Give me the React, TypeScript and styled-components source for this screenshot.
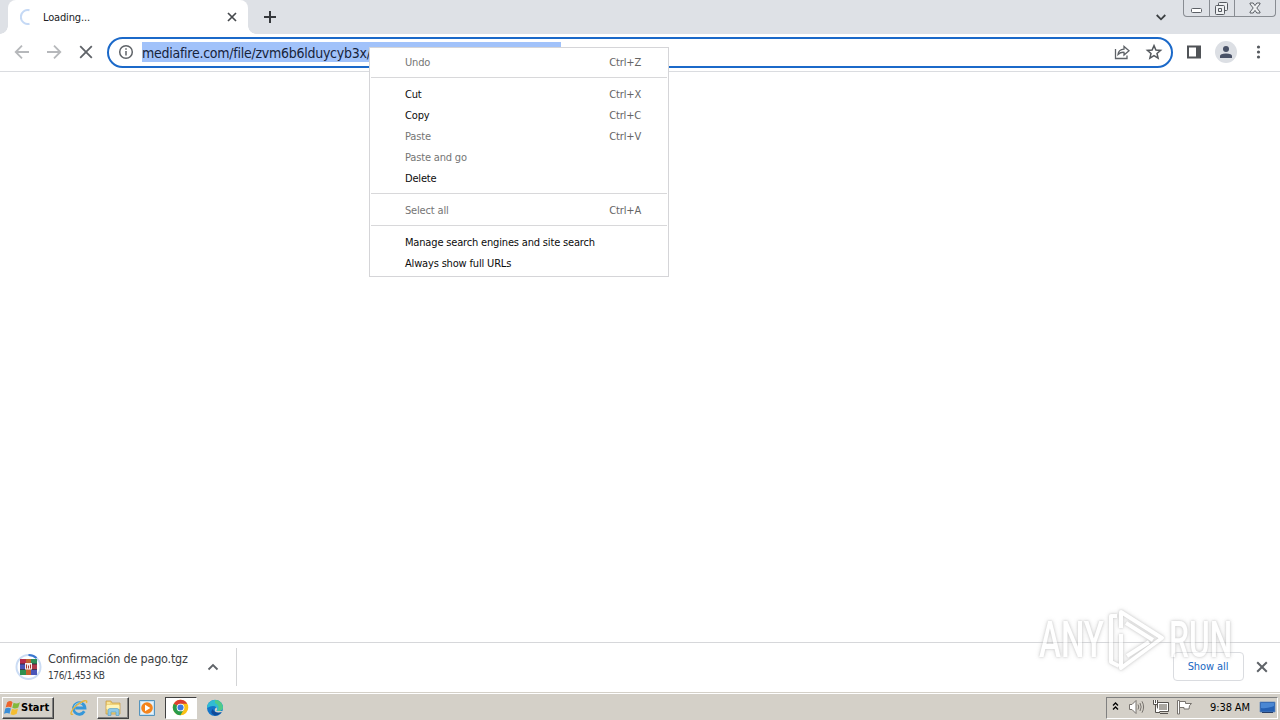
import React from 'react';
import styled, { createGlobalStyle } from 'styled-components';

interface MenuEntry {
	label: string;
	shortcut?: string;
	disabled?: boolean;
}

const menuGroups: MenuEntry[][] = [
	[{ disabled: true, label: 'Undo', shortcut: 'Ctrl+Z' }],
	[
		{ label: 'Cut', shortcut: 'Ctrl+X' },
		{ label: 'Copy', shortcut: 'Ctrl+C' },
		{ disabled: true, label: 'Paste', shortcut: 'Ctrl+V' },
		{ disabled: true, label: 'Paste and go' },
		{ label: 'Delete' }
	],
	[{ disabled: true, label: 'Select all', shortcut: 'Ctrl+A' }],
	[
		{ label: 'Manage search engines and site search' },
		{ label: 'Always show full URLs' }
	]
];

const GlobalStyle = createGlobalStyle`
	body {
		margin: 0;
		overflow: hidden;
	}

	* {
		box-sizing: border-box;
	}

	svg {
		display: block;
		flex: none;
	}
`;

const Screen = styled.div`
	position: relative;
	display: flex;
	flex-direction: column;
	width: 1280px;
	height: 720px;
	overflow: hidden;
	background: #fff;
	color: #202124;
	font: 11px 'DejaVu Sans Condensed', 'DejaVu Sans', sans-serif;
	font-stretch: condensed;
	white-space: nowrap;
`;

const Text = styled.span<{ $size?: number; $spacing?: number; $color?: string; $bold?: boolean }>`
	font-size: ${p => p.$size || 11}px;
	letter-spacing: ${p => p.$spacing || 0}px;
	color: ${p => p.$color || 'inherit'};
	font-weight: ${p => p.$bold ? 700 : 400};
`;

const TabStrip = styled.div`
	display: flex;
	height: 34px;
	flex: none;
	padding-left: 8px;
	background: #dee1e6;
`;

const Tab = styled.div`
	position: relative;
	display: flex;
	align-items: center;
	width: 240px;
	padding: 0 11px 0 12px;
	border-radius: 8px 8px 0 0;
	background: #fff;

	&::before,
	&::after {
		content: '';
		position: absolute;
		bottom: 0;
		width: 8px;
		height: 8px;
	}

	&::before {
		left: -8px;
		background: radial-gradient(circle at 0 0, transparent 7.5px, #fff 8px);
	}

	&::after {
		right: -8px;
		background: radial-gradient(circle at 100% 0, transparent 7.5px, #fff 8px);
	}
`;

const TabTitle = styled(Text)`
	flex: 1;
	margin-left: 7px;
`;

const NewTab = styled.div`
	display: flex;
	align-items: center;
	margin-left: 15px;
`;

const StripEnd = styled.div`
	display: flex;
	align-items: flex-start;
	margin-left: auto;
	padding-right: 4px;
`;

const TabSearch = styled.div`
	padding: 14px 17px 0 0;
`;

const WindowButtons = styled.div`
	display: flex;
	height: 17px;
	border: 1px solid #888c92;
	border-top: 0;
	border-radius: 0 0 4px 4px;
`;

const WindowButton = styled.div<{ $width: number }>`
	display: flex;
	align-items: center;
	justify-content: center;
	width: ${p => p.$width}px;

	& + & {
		border-left: 1px solid #888c92;
	}
`;

const Toolbar = styled.div`
	display: flex;
	align-items: center;
	height: 38px;
	flex: none;
	padding: 0 12px 1px 12px;
	border-bottom: 1px solid #dadce0;
`;

const NavButtons = styled.div`
	display: flex;
	gap: 12px;
	margin-right: 11px;
`;

const Omnibox = styled.div`
	display: flex;
	align-items: center;
	width: 1066px;
	height: 31px;
	margin-top: 1px;
	padding: 0 8px 1px 9px;
	border: 2px solid #1b69c9;
	border-radius: 16px;
`;

const Url = styled.div`
	width: 419px;
	height: 20px;
	margin: 0 auto 0 6px;
	overflow: hidden;
	background: #a1c2fa;
	color: #17243b;
	font: 14px/22px 'DejaVu Sans Condensed', 'DejaVu Sans', sans-serif;
	font-stretch: condensed;
	letter-spacing: -0.26px;
`;

const UrlTail = styled.span`
	margin-left: 66px;
`;

const BoxActions = styled.div`
	display: flex;
	gap: 14px;
`;

const ToolbarActions = styled.div`
	display: flex;
	align-items: center;
	margin-left: 13px;
`;

const Avatar = styled.div`
	display: flex;
	align-items: center;
	justify-content: center;
	width: 22px;
	height: 22px;
	margin: 0 13px;
	border-radius: 50%;
	background: #dcdfe4;
`;

const Page = styled.div`
	flex: 1;
	background: #fff;
`;

const Menu = styled.div`
	position: absolute;
	left: 369px;
	top: 47px;
	width: 300px;
	height: 230px;
	padding: 4px 1px;
	border: 1px solid #d5d5d8;
	background: #fff;
`;

const MenuGroup = styled.div`
	& + & {
		margin-top: 4px;
		padding-top: 6px;
		border-top: 1px solid #d8d8da;
	}
`;

const MenuRow = styled.div<{ $disabled?: boolean }>`
	display: flex;
	align-items: center;
	justify-content: space-between;
	height: 21px;
	padding: 0 26px 0 34px;
	color: ${p => p.$disabled ? '#757575' : '#0c0c0c'};
	letter-spacing: -0.17px;
`;

const Shortcut = styled.span`
	color: #656565;
`;

const Shelf = styled.div`
	display: flex;
	align-items: center;
	height: 50px;
	flex: none;
	padding: 0 12px 2px 15px;
	border-top: 1px solid #d6d7da;
`;

const Download = styled.div`
	display: flex;
	align-items: center;
	width: 222px;
	height: 38px;
	border-right: 1px solid #d3d4d6;
`;

const FileInfo = styled.div`
	display: flex;
	flex-direction: column;
	gap: 4px;
	width: 140px;
	margin: 0 19px 0 6px;
	padding-bottom: 1px;
`;

const ShowAll = styled.div`
	display: flex;
	align-items: center;
	justify-content: center;
	width: 71px;
	height: 29px;
	margin: 0 12px 0 auto;
	padding-right: 1px;
	border: 1px solid #dadce0;
	border-radius: 4px;
	color: #1967c2;
`;

const Taskbar = styled.div`
	display: flex;
	align-items: center;
	height: 28px;
	flex: none;
	padding: 2px 2px 0 2px;
	border-top: 1px solid #d4d0c8;
	background: #d4d0c8;
	box-shadow: inset 0 1px #fff;
`;

const StartButton = styled.div`
	display: flex;
	align-items: center;
	width: 52px;
	height: 22px;
	padding-left: 1px;
	border: 1px solid;
	border-color: #fff #404040 #404040 #fff;
	box-shadow: inset -1px -1px #808080;
	color: #000;
`;

const TaskItem = styled.div<{ $state?: 'raised' | 'pressed' }>`
	display: flex;
	align-items: center;
	justify-content: center;
	width: 32px;
	height: 22px;
	border: 1px solid;
	border-color: ${p => p.$state === 'raised' ? '#fff #404040 #404040 #fff'
		: p.$state === 'pressed' ? '#404040 #fff #fff #404040' : 'transparent'};
	background: ${p => p.$state === 'pressed' ? '#fff' : 'transparent'};
	box-shadow: ${p => p.$state === 'raised' ? 'inset -1px -1px #808080' : 'none'};
`;

const TaskItems = styled.div`
	display: flex;
	gap: 2px;
	margin-left: 9px;
`;

const Tray = styled.div`
	display: flex;
	align-items: center;
	width: 172px;
	height: 22px;
	margin-left: auto;
	padding-left: 5px;
	border: 1px solid;
	border-color: #808080 #fff #fff #808080;
	color: #000;
`;

const TrayIcons = styled.div`
	display: flex;
	align-items: center;
	gap: 7px;
	padding-bottom: 1px;
`;

const Clock = styled(Text)`
	width: 41px;
	margin: 0 8px 0 16px;
`;

const Watermark = styled.div`
	position: absolute;
	left: 1039px;
	top: 606px;
	display: flex;
	align-items: center;
	gap: 2px;
	width: 200px;
	height: 68px;
	opacity: .6;
	filter: drop-shadow(0 0 1px #aaa) drop-shadow(0 0 2px #ccc);
`;

const Brand = styled.div<{ $scale: number }>`
	width: 66px;
	color: #fff;
	font: 500 50px/68px Roboto, sans-serif;
	transform: scaleX(${p => p.$scale});
	transform-origin: left;
`;

const CloseIcon = ({ size = 8, width = 1.8, color = '#46494d' }: { size?: number; width?: number; color?: string }) => (
	<svg width={size} height={size} viewBox='0 0 10 10' fill='none' stroke={color} strokeWidth={width * 10 / size}>
		<path d='M1 1 9 9M9 1 1 9'/>
	</svg>
);

const ArrowIcon = ({ flip }: { flip?: boolean }) => (
	<svg width='20' height='20' viewBox='0 0 20 20' fill='none' stroke='#b6b8bb' strokeWidth='1.8'>
		<path d={flip ? 'M3 10H16M10 3.7 16.3 10 10 16.3' : 'M17 10H4M10 3.7 3.7 10 10 16.3'}/>
	</svg>
);

const ArchiveIcon = () => (
	<svg width='27' height='28' viewBox='0 0 27 28'>
		<circle cx='13.5' cy='14' r='12' fill='none' stroke='#cbdcf4' strokeWidth='2'/>
		<path d='M13.5 2A12 12 0 0 1 21.5 5' fill='none' stroke='#3976cf' strokeWidth='2'/>
		<path d='M5 6H11V11H5Z' fill='#b52d4c'/>
		<path d='M16 6H22V11H16Z' fill='#2f8f55'/>
		<path d='M5 11H11V16.5H5ZM16 16.5H22V22H16Z' fill='#4a55b8'/>
		<path d='M5 16.5H11V22H5Z' fill='#2f9150'/>
		<path d='M16 11H22V16.5H16Z' fill='#b03a4a'/>
		<path d='M5 11H22M5 16.5H22' stroke='#29213b' strokeWidth='.8'/>
		<path d='M11 6H16V22H11Z' fill='#c4622f'/>
		<path d='M10 10H17V16.5H10Z' fill='#f3eeee'/>
		<path d='M11.5 15.5V11.5M13.5 12.5V15.5M15.5 11.5V15.5' fill='none' stroke='#a8392f' strokeWidth='1'/>
	</svg>
);

const WindowsLogo = () => (
	<svg width='17' height='18' viewBox='0 0 16 17'>
		<path d='M3 3Q6 1 8 3L6.8 8Q4 6.5 1.5 8Z' fill='#ed642c'/>
		<path d='M9 3.5Q12 5 15 3L13.5 8Q10.5 9.8 7.8 8.3Z' fill='#82b93c'/>
		<path d='M1.2 9Q4 7.5 6.5 9L5.2 14Q3 12.5 0 14Z' fill='#3a8ed7'/>
		<path d='M7.5 9.3Q10.5 10.8 13.2 9L12 14Q9 16 6.2 14.3Z' fill='#f5bd31'/>
	</svg>
);

const ExplorerIcon = () => (
	<svg width='18' height='18' viewBox='0 0 18 18' fill='none'>
		<path d='M14.3 12.3A5.8 5.8 0 1 1 15 9H5.2' stroke='#3697d9' strokeWidth='2.8'/>
		<path d='M4 8.3A5.5 5.5 0 0 1 12 4.5' stroke='#8bd0f3'/>
		<path d='M3 15C-.5 17 .5 11 7 6S18 .2 16.4 4' stroke='#e9b53a' strokeWidth='1.4'/>
	</svg>
);

const FolderIcon = () => (
	<svg width='18' height='18' viewBox='0 0 18 18'>
		<path d='M2 2H7L8 4H16V15H2Z' fill='#efd27a' stroke='#c79a3c' strokeWidth='.7'/>
		<path d='M3 4H6M3 6.5H15V10H3Z' fill='#fff4b8' stroke='#fff4b8'/>
		<path d='M4 16.5V11.5Q4 9.5 6 9.5H13Q15 9.5 15 11.5V16.5H12V13H7V16.5Z' fill='#8ec9e9' stroke='#529ac1' strokeWidth='.6'/>
	</svg>
);

const PlayerIcon = () => (
	<svg width='18' height='18' viewBox='0 0 18 18'>
		<path d='M1.5 1.5H16.5V16.5H1.5Z' fill='#c4e0f3' stroke='#5594bd'/>
		<path d='M3 3H15V15H3Z' fill='#e5f2fa'/>
		<circle cx='9' cy='9' r='5.8' fill='#f4841c'/>
		<path d='M7 5.7 12.3 9 7 12.3Z' fill='#fff'/>
	</svg>
);

const ChromeIcon = () => (
	<svg width='18' height='17' viewBox='0 0 19 18'>
		<circle cx='9' cy='9' r='8.2' fill='#fbc116'/>
		<path d='M9 9 1.9 4.9A8.2 8.2 0 0 1 16.1 4.9H9Z' fill='#dc3e31'/>
		<path d='M1.9 4.9A8.2 8.2 0 0 0 8.9 17.2L12.5 11 9 9Z' fill='#299b4b'/>
		<circle cx='9' cy='9' r='4.1' fill='#fff'/>
		<circle cx='9' cy='9' r='3.2' fill='#3c78df'/>
	</svg>
);

const EdgeIcon = () => (
	<svg width='18' height='18' viewBox='0 0 18 18'>
		<circle cx='9' cy='9' r='8' fill='#1575c9'/>
		<path d='M1 9A8 8 0 0 1 17 8.6Q17 12 12.5 12H10.5Q12 10 10.4 8.2 7 5.5 1 9Z' fill='#31bcd3'/>
		<path d='M9 1Q16 1 17 8.6 16.5 12 12 12 14 6 9 4Z' fill='#50ca89'/>
		<path d='M6.8 10Q8 14.5 15.5 13 12.5 17 8.5 16.4 3 14 6.8 10Z' fill='#104b99'/>
		<path d='M10.4 8.2Q12 10 10.5 12H17V12.5Q13 14 9.6 13 7.5 10.5 10.4 8.2Z' fill='#d4d0c8'/>
	</svg>
);

const ContextMenu = () => (
	<Menu>
		{menuGroups.map((group, i) => (
			<MenuGroup key={i}>
				{group.map(({ disabled, label, shortcut }) => (
					<MenuRow key={label} $disabled={disabled}>
						<span>{label}</span>
						{shortcut && <Shortcut>{shortcut}</Shortcut>}
					</MenuRow>
				))}
			</MenuGroup>
		))}
	</Menu>
);

const App = () => (
	<Screen>
		<GlobalStyle/>
		<TabStrip>
			<Tab>
				<svg width='16' height='16' viewBox='0 0 16 16' fill='none'>
					<path d='M9.5 1.2A7 7 0 1 0 9.5 14.8' stroke='#c5d9f5' strokeWidth='2'/>
				</svg>
				<TabTitle $spacing={-0.15}>Loading...</TabTitle>
				<CloseIcon size={10} width={1.7}/>
			</Tab>
			<NewTab>
				<svg width='14' height='14' viewBox='0 0 14 14' stroke='#35383c' strokeWidth='2'>
					<path d='M7 1V13M1 7H13'/>
				</svg>
			</NewTab>
			<StripEnd>
				<TabSearch>
					<svg width='10' height='7' viewBox='0 0 10 7' fill='none' stroke='#3c4043' strokeWidth='1.8'>
						<path d='M.7 1 5 5.3 9.3 1'/>
					</svg>
				</TabSearch>
				<WindowButtons>
					<WindowButton $width={25}>
						<svg width='12' height='9' viewBox='0 0 12 9' fill='#fff' stroke='#5c6066'>
							<rect x='.5' y='4.5' width='10' height='4' rx='1'/>
						</svg>
					</WindowButton>
					<WindowButton $width={25}>
						<svg width='14' height='13' viewBox='0 0 14 13' fill='#eef0f2' stroke='#565a60'>
							<rect x='3.5' y='.5' width='9' height='8' rx='1'/>
							<rect x='.5' y='3.5' width='9' height='9' rx='1'/>
							<path d='M3.5 6.5H6.5V9.5H3.5Z'/>
						</svg>
					</WindowButton>
					<WindowButton $width={41}>
						<svg width='13' height='12' viewBox='0 0 13 12' fill='#eef0f2' stroke='#5c6066'>
							<path d='M1 1H4.2L6 3.6 7.8 1H11V2L7.8 6 11 10V11H7.8L6 8.4 4.2 11H1V10L4.2 6 1 2Z'/>
						</svg>
					</WindowButton>
				</WindowButtons>
			</StripEnd>
		</TabStrip>
		<Toolbar>
			<NavButtons>
				<ArrowIcon/>
				<ArrowIcon flip/>
				<svg width='20' height='20' viewBox='0 0 20 20' fill='none' stroke='#5f6368' strokeWidth='1.8'>
					<path d='M4.2 4.2 15.8 15.8M15.8 4.2 4.2 15.8'/>
				</svg>
			</NavButtons>
			<Omnibox>
				<svg width='18' height='18' viewBox='0 0 18 18' fill='none' stroke='#5f6368' strokeWidth='1.5'>
					<circle cx='8' cy='9' r='6.3'/>
					<path d='M8 8V12.5M8 5.3V6.8'/>
				</svg>
				<Url>mediafire.com/file/zvm6b6lduycyb3x/<UrlTail>/</UrlTail></Url>
				<BoxActions>
					<svg width='18' height='18' viewBox='0 0 18 18' fill='none' stroke='#5f6368' strokeWidth='1.3'>
						<path d='M2.5 6V15.5H14V12.5M5 11.5Q5.5 6.5 11 6.2V3.5L16 7.8 11 12V9.3Q7.5 9 5 11.5Z'/>
					</svg>
					<svg width='18' height='18' viewBox='0 0 18 18' fill='none' stroke='#54585d' strokeWidth='1.5'>
						<path d='M9 2.6 10.9 7 15.6 7.4 12 10.5 13.1 15.2 9 12.7 4.9 15.2 6 10.5 2.4 7.4 7.1 7Z'/>
					</svg>
				</BoxActions>
			</Omnibox>
			<ToolbarActions>
				<svg width='16' height='16' viewBox='0 0 16 16'>
					<path d='M1 1.5H15V14.5H1ZM3 3.5V12.5H10V3.5Z' fill='#505357' fillRule='evenodd'/>
				</svg>
				<Avatar>
					<svg width='14' height='14' viewBox='0 0 14 14' fill='#485166'>
						<circle cx='7' cy='4' r='3'/>
						<path d='M1 13V11Q1 8.5 7 8.5T13 11V13Z'/>
					</svg>
				</Avatar>
				<svg width='16' height='16' viewBox='0 0 16 16' fill='#55595e'>
					<circle cx='8.5' cy='3' r='1.6'/>
					<circle cx='8.5' cy='8' r='1.6'/>
					<circle cx='8.5' cy='13' r='1.6'/>
				</svg>
			</ToolbarActions>
		</Toolbar>
		<Page/>
		<Shelf>
			<Download>
				<ArchiveIcon/>
				<FileInfo>
					<Text $size={12.5} $spacing={-0.2} $color='#3c4043'>Confirmación de pago.tgz</Text>
					<Text $size={10} $spacing={-0.35} $color='#3c4043'>176/1,453 KB</Text>
				</FileInfo>
				<svg width='12' height='8' viewBox='0 0 12 8' fill='none' stroke='#5f6368' strokeWidth='1.8'>
					<path d='M1.5 6.5 6 2 10.5 6.5'/>
				</svg>
			</Download>
			<ShowAll><Text $spacing={-0.1}>Show all</Text></ShowAll>
			<CloseIcon size={12} width={2} color='#5f6368'/>
		</Shelf>
		<Taskbar>
			<StartButton>
				<WindowsLogo/>
				<Text $bold>Start</Text>
			</StartButton>
			<TaskItems>
				<TaskItem><ExplorerIcon/></TaskItem>
				<TaskItem $state='raised'><FolderIcon/></TaskItem>
				<TaskItem><PlayerIcon/></TaskItem>
				<TaskItem $state='pressed'><ChromeIcon/></TaskItem>
				<TaskItem><EdgeIcon/></TaskItem>
			</TaskItems>
			<Tray>
				<TrayIcons>
					<svg width='9' height='12' viewBox='0 0 9 12' fill='none' stroke='#000' strokeWidth='1.3'>
						<path d='M1 4.5 3.5 2 6 4.5M1 8.5 3.5 6 6 8.5'/>
					</svg>
					<svg width='18' height='16' viewBox='0 0 18 16' fill='#fff' stroke='#77736e'>
						<path d='M1.5 5.5H4L8 1.5V14.5L4 10.5H1.5Z'/>
						<path d='M10 5.5Q11.5 8 10 10.5M12 4Q14.3 8 12 12M14 2.3Q17.2 8 14 13.7' fill='none'/>
					</svg>
					<svg width='17' height='16' viewBox='0 0 17 16' fill='#fff' stroke='#55524e'>
						<path d='M4.5 3.5H15.5V12.5H4.5Z'/>
						<path d='M6 5H14V11H6Z' fill='#aaa7a1' stroke='none'/>
						<path d='M.5 1V5.5H4.5V1M2.5 1V4M2.5 6V13.5H7M7 14.5H15'/>
					</svg>
					<svg width='17' height='16' viewBox='0 0 17 16' fill='#fff' stroke='#77736e'>
						<path d='M.5 1.5H2.5V15H.5ZM2.5 2.5H8.5V4.5H14.5L12.5 6.7 12 10H7V8.5H2.5Z'/>
					</svg>
				</TrayIcons>
				<Clock $spacing={-0.1}>9:38 AM</Clock>
				<svg width='17' height='15' viewBox='0 0 17 15'>
					<path d='M1 2H16V12H1Z' fill='#2560b3' stroke='#5f86b9' strokeWidth='.7'/>
					<path d='M2 3H15V6Q8 9 2 8Z' fill='#4a87d3'/>
					<path d='M3 12.5H14' stroke='#263d66'/>
				</svg>
			</Tray>
		</Taskbar>
		<ContextMenu/>
		<Watermark>
			<Brand $scale={0.66}>ANY</Brand>
			<svg width='60' height='68' viewBox='0 0 60 68' fill='none' stroke='#fff' strokeWidth='4' strokeLinejoin='round'>
				<path d='M10 10H4V56L12 60M14 22V6L55 32 14 62V28M19 17 46 34M20 50 42 36'/>
			</svg>
			<Brand $scale={0.635}>RUN</Brand>
		</Watermark>
	</Screen>
);

export default App;
